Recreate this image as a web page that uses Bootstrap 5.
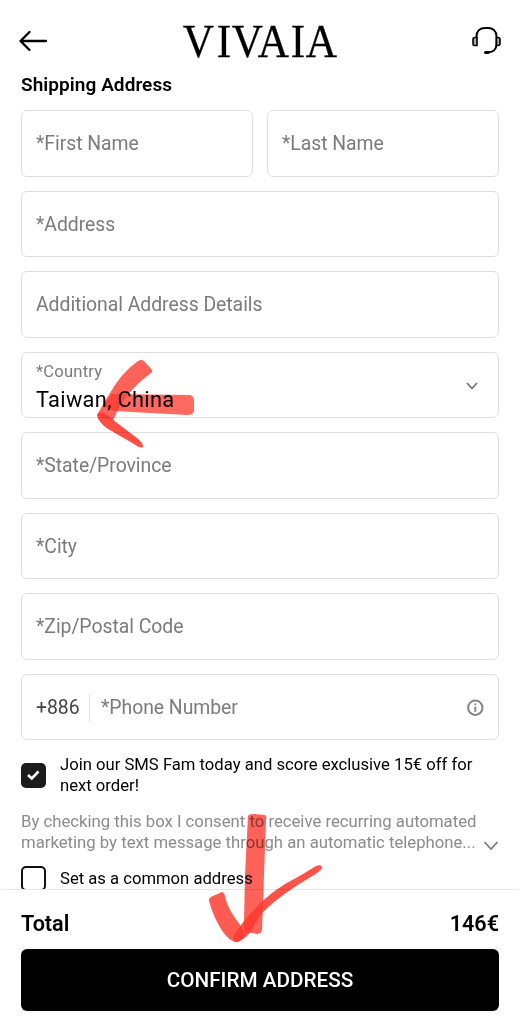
<!DOCTYPE html>
<html lang="en">
<head>
<meta charset="utf-8">
<meta name="viewport" content="width=device-width, initial-scale=1">
<title>Shipping Address</title>
<link href="https://cdn.jsdelivr.net/npm/bootstrap@5.3.0/dist/css/bootstrap.min.css" rel="stylesheet">
<style>
body{font-family:Roboto,"Liberation Sans",sans-serif;color:#000;background:#fff;width:520px;height:1024px;overflow:hidden}
.topbar{height:73px;padding:0 18px}
.topbar svg{display:block;flex:none}
.page-title{font-size:19px;font-weight:600;line-height:24px;margin:0 0 13.3px;letter-spacing:.06px}
.scroll-area{height:816px;padding:0 21px}
.fields{display:grid;gap:14px;grid-auto-rows:66.5px}
.field{border:1.5px solid #dfdfdf;border-radius:6px;padding:1px 14px 0;color:#7b7b7b;font-size:19.4px;line-height:24px;letter-spacing:-.04px;background:#fff;height:66.5px}
.field-label{font-size:16.6px;line-height:20px;letter-spacing:.2px}
.field-value{font-size:21.8px;line-height:28px;color:#000;letter-spacing:.32px}
.dial{color:#444;width:54px;height:28px;line-height:28px;border-right:1.5px solid #e0e0e0;margin-right:11px}
.opt{font-size:16.65px;line-height:21px}
.box{width:25px;height:25px;border-radius:5px;flex:none}
.box-on{background:#1b1b1b}
.box-off{border:2px solid #111}
.terms{font-size:16.72px;line-height:21px;color:#8b8b8b}
.footer-bar{height:135px;border-top:1.5px solid #e6e6e6;margin:0 2px;padding:0 19px;background:#fff}
.total{font-size:21.6px;font-weight:600;line-height:28px;padding-top:20px;height:58.5px}
.confirm{height:62.3px;padding-top:1px;border-radius:6px;background:#000;color:#fff;font-size:20.7px;font-weight:500}
.ink{left:0;top:0;pointer-events:none;mix-blend-mode:multiply}
</style>
</head>
<body class="position-relative">
<header class="topbar d-flex align-items-center justify-content-between">
  <svg width="30" height="26" viewBox="0 0 30 26" fill="none" stroke="#000" stroke-width="2.3" stroke-linecap="round" stroke-linejoin="round" style="margin-top:9px"><path d="M28 13H2.500M11.500 4L2.500 13L11.500 22"/></svg>
  <svg width="180" height="64" viewBox="168.500 8 180 64" style="margin-top:7px"><text y="57" transform="scale(.92 1)" font-family="Liberation Serif, serif" font-size="47" x="198.200 235.100 251.400 279.700 315.500 331.800" stroke="#000" stroke-width=".3">VIVAIA</text></svg>
  <svg width="32" height="32" viewBox="470 25 32 32" fill="none" stroke="#000" stroke-width="2" stroke-linecap="round" stroke-linejoin="round" style="margin-top:9px"><path d="M476.500 38V36.500C476.500 31 480 28 485 28H488C493 28 496.500 31 496.500 36.500V44C496.500 49.500 494 52 487 52.600"/><path d="M477 37.500H475Q473 37.500 473 39.500V44Q473 45.500 474.500 45.500H477ZM496.500 37.500H498Q500 37.500 500 39.500V43.500Q500 45.500 498 45.500H496.500Z" stroke-width="1.600" fill="#aaa"/><path d="M485.500 52.500H488" stroke-width="3"/></svg>
</header>
<main class="scroll-area overflow-hidden">
  <h1 class="page-title">Shipping Address</h1>
  <div class="fields">
    <div class="d-flex" style="gap:14px">
      <div class="field d-flex align-items-center flex-fill w-50"><span>*First Name</span></div>
      <div class="field d-flex align-items-center flex-fill w-50"><span>*Last Name</span></div>
    </div>
    <div class="field d-flex align-items-center"><span>*Address</span></div>
    <div class="field d-flex align-items-center"><span>Additional Address Details</span></div>
    <div class="field d-flex align-items-center justify-content-between">
      <div class="d-flex flex-column pt-1 pb-1"><span class="field-label mt-1">*Country</span><span class="field-value mt-1">Taiwan, China</span></div>
      <svg width="12" height="8" viewBox="0 0 12 8" fill="none" stroke="#666" stroke-width="1.5" style="margin:1px 6px 0 0"><path d="M1 1L6 6.500L11 1"/></svg>
    </div>
    <div class="field d-flex align-items-center"><span>*State/Province</span></div>
    <div class="field d-flex align-items-center"><span>*City</span></div>
    <div class="field d-flex align-items-center"><span>*Zip/Postal Code</span></div>
    <div class="field d-flex align-items-center">
      <span class="dial">+886</span><span>*Phone Number</span>
      <svg class="ms-auto" width="18" height="18" viewBox="0 0 18 18" fill="none" stroke="#858585" stroke-width="2"><circle cx="9.300" cy="8.700" r="7.200"/><path d="M9.300 7.700V12.700M9.300 4.400V6.300"/></svg>
    </div>
  </div>
  <div class="opt d-flex align-items-center" style="margin-top:14px;gap:14px">
    <span class="box box-on d-flex align-items-center justify-content-center"><svg width="15" height="12" viewBox="0 0 15 12" fill="none" stroke="#fff" stroke-width="2.600"><path d="M2 6L5.800 9.500L12.500 2.500"/></svg></span>
    <span>Join our SMS Fam today and score exclusive 15€ off for<br>next order!</span>
  </div>
  <div class="terms d-flex align-items-end justify-content-between" style="margin-top:15px">
    <span class="text-nowrap">By checking this box I consent to receive recurring automated<br>marketing by text message through an automatic telephone...</span>
    <svg class="flex-shrink-0" width="16" height="10" viewBox="0 0 16 10" fill="none" stroke="#777" stroke-width="1.700" style="margin-bottom:2px"><path d="M1.500 1L8 8L14.500 1"/></svg>
  </div>
  <div class="opt d-flex align-items-center" style="margin-top:13px;gap:14px">
    <span class="box box-off"></span><span>Set as a common address</span>
  </div>
</main>
<footer class="footer-bar">
  <div class="total d-flex justify-content-between"><span>Total</span><span>146€</span></div>
  <div class="confirm d-flex align-items-center justify-content-center"><span>CONFIRM ADDRESS</span></div>
</footer>
<svg class="ink position-absolute" width="520" height="1024" viewBox="0 0 520 1024" fill="#ff3b30">
  <path opacity=".8" d="M138 361Q141 359 144 361L152 370Q153 372 151 373Q131 388 121 404Q116 412 113 421L97 415Q105 401 110 393Q122 372 138 361Z"/>
  <path opacity=".77" d="M112 394L190 395Q194 396 194 401V411Q193 415 188 415L113 411L103 405Z"/>
  <path opacity=".9" d="M97 415Q99 411 104 413L137 438Q144 444 143 447Q141 449 134 444L108 429Q98 422 97 415Z"/>
  <path opacity=".8" d="M248 816Q249 814 253 814L265 815Q267 816 266 820L262 930Q261 934 257 934L246 932Q243 930 244 921L245 875Z"/>
  <path opacity=".84" d="M209 901Q208 898 213 896L222 892Q225 893 225 897Q228 910 241 926L245 935Q241 943 235 942Q228 940 221 929Q213 916 209 901Z"/>
  <path opacity=".88" d="M235 942Q231 938 238 929C253 909 266 896 285 884Q302 875 316 866Q322 864 322 868Q321 871 309 878Q282 894 265 910Q256 919 252 930Q244 941 235 942Z"/>
</svg>
<script src="https://cdn.jsdelivr.net/npm/bootstrap@5.3.0/dist/js/bootstrap.bundle.min.js"></script>
</body>
</html>
